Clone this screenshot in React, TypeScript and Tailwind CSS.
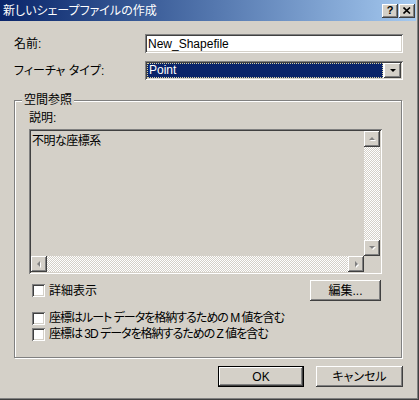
import React from 'react';

const font = "font-['Liberation_Sans','Noto_Sans_CJK_JP',sans-serif] [font-feature-settings:'palt']";
const raised =
  'bg-[#d4d0c8] shadow-[inset_-1px_-1px_0_#404040,inset_1px_1px_0_#ffffff,inset_-2px_-2px_0_#808080,inset_2px_2px_0_#d4d0c8]';
const sunken =
  'shadow-[inset_1px_1px_0_#808080,inset_-1px_-1px_0_#ffffff,inset_2px_2px_0_#404040,inset_-2px_-2px_0_#d4d0c8]';
const dither = 'bg-[repeating-conic-gradient(#ffffff_0_25%,#d4d0c8_0_50%)] bg-[length:2px_2px]';

function Arrow({ dir, disabled }: { dir: 'up' | 'down' | 'left' | 'right'; disabled?: boolean }) {
  const pts = {
    up: '4,2 1,5 7,5',
    down: '1,2 7,2 4,5',
    left: '5,1 5,7 2,4',
    right: '3,1 3,7 6,4',
  }[dir];
  return (
    <svg width="8" height="8" viewBox="0 0 8 8">
      {disabled && <polygon points={pts} fill="#ffffff" transform="translate(1,1)" />}
      <polygon points={pts} fill={disabled ? '#808080' : '#000000'} />
    </svg>
  );
}

function ScrollBtn({ dir }: { dir: 'up' | 'down' | 'left' | 'right' }) {
  return (
    <div className={`${raised} w-[16px] h-[16px] flex items-center justify-center shrink-0`}>
      <Arrow dir={dir} disabled />
    </div>
  );
}

function Check({ label, tight }: { label: string; tight?: boolean }) {
  return (
    <div className="flex items-center h-[16px]">
      <div className={`${sunken} bg-white w-[13px] h-[13px] shrink-0`} />
      <span className={`ml-[4px] text-[12px] leading-[14px] ${tight ? 'tracking-[-1px]' : ''}`}>{label}</span>
    </div>
  );
}

function Button({ children, width, isDefault }: { children: React.ReactNode; width: string; isDefault?: boolean }) {
  return (
    <div
      className={`${width} h-[21px] flex items-center justify-center text-[12px] leading-[14px] ${
        isDefault
          ? 'bg-[#d4d0c8] border border-black shadow-[inset_-1px_-1px_0_#404040,inset_1px_1px_0_#ffffff,inset_-2px_-2px_0_#808080]'
          : raised
      }`}
    >
      {children}
    </div>
  );
}

export default function App() {
  return (
    <div
      className={`${font} w-[419px] h-[400px] bg-[#d4d0c8] text-black flex flex-col pr-[3px] pb-[3px] shadow-[inset_-1px_-1px_0_#404040,inset_-2px_-2px_0_#808080] overflow-hidden`}
    >
      {/* title bar */}
      <div className="h-[21px] shrink-0 flex items-center bg-gradient-to-r from-[#0a246a] to-[#a6caf0] pl-[3px] pr-[1px]">
        <span className="text-white text-[12px] leading-[14px] flex-1">新しいシェープファイルの作成</span>
        <div className="flex gap-[1px]">
          <div className={`${raised} w-[16px] h-[14px] flex items-center justify-center text-[11px] font-bold leading-none`}>?</div>
          <div className={`${raised} w-[16px] h-[14px] flex items-center justify-center`}>
            <svg width="8" height="7" viewBox="0 0 8 7">
              <path d="M0.5 0.5 L7 6.5 M7 0.5 L0.5 6.5" stroke="#000" strokeWidth="1.6" />
            </svg>
          </div>
        </div>
      </div>

      <div className="flex-1 flex flex-col pl-[14px] pr-[13px]">
        <div className="flex items-center h-[19px] mt-[13px]">
          <span className="w-[131px] text-[12px] leading-[14px]">名前:</span>
          <div className={`${sunken} bg-white flex-1 h-[19px] flex items-center pl-[3px] text-[12px] leading-[14px]`}>
            New_Shapefile
          </div>
        </div>

        <div className="flex items-center h-[19px] mt-[8px]">
          <span className="w-[131px] text-[12px] leading-[14px]">フィーチャ タイプ:</span>
          <div className={`${sunken} bg-white flex-1 h-[19px] flex items-center p-[2px]`}>
            <div className="flex-1 h-full bg-[#0a246a] border border-dotted border-[#d8d0a0] text-white text-[12px] leading-[13px] pl-[1px] mr-[1px]">
              Point
            </div>
            <div className={`${raised} w-[17px] h-full flex items-center justify-center`}>
              <Arrow dir="down" />
            </div>
          </div>
        </div>

        {/* group box */}
        <div className="relative mt-[20px] w-[388px] h-[258px] border border-[#808080] shadow-[inset_1px_1px_0_#ffffff,1px_1px_0_#ffffff] pl-[14px] pt-[10px]">
          <span className="absolute left-[7px] top-[-8px] px-[2px] bg-[#d4d0c8] text-[12px] leading-[14px]">空間参照</span>
          <div className="text-[12px] leading-[14px]">説明:</div>

          <div className={`${sunken} bg-[#d4d0c8] mt-[4px] w-[353px] h-[145px] p-[2px] flex flex-col`}>
            <div className="flex flex-1">
              <div className="flex-1 text-[12px] leading-[14px] pl-[1px] pt-[3px] tracking-[-0.5px]">不明な座標系</div>
              <div className={`w-[16px] flex flex-col ${dither}`}>
                <ScrollBtn dir="up" />
                <div className="flex-1" />
                <ScrollBtn dir="down" />
              </div>
            </div>
            <div className="flex h-[16px]">
              <div className={`flex-1 flex ${dither}`}>
                <ScrollBtn dir="left" />
                <div className="flex-1" />
                <ScrollBtn dir="right" />
              </div>
              <div className="w-[16px] bg-[#d4d0c8]" />
            </div>
          </div>

          <div className="flex items-center justify-between mt-[6px] w-[352px]">
            <div className="pl-[3px]">
              <Check label="詳細表示" />
            </div>
            <Button width="w-[71px]">編集...</Button>
          </div>

          <div className="flex flex-col pl-[3px] mt-[9px]">
            <Check tight label="座標はルート データを格納するための M 値を含む" />
            <Check tight label="座標は 3D データを格納するための Z 値を含む" />
          </div>
        </div>

        <div className="flex justify-end gap-[12px] mt-[8px]">
          <Button width="w-[86px]" isDefault>
            OK
          </Button>
          <Button width="w-[87px]">キャンセル</Button>
        </div>
      </div>
    </div>
  );
}
